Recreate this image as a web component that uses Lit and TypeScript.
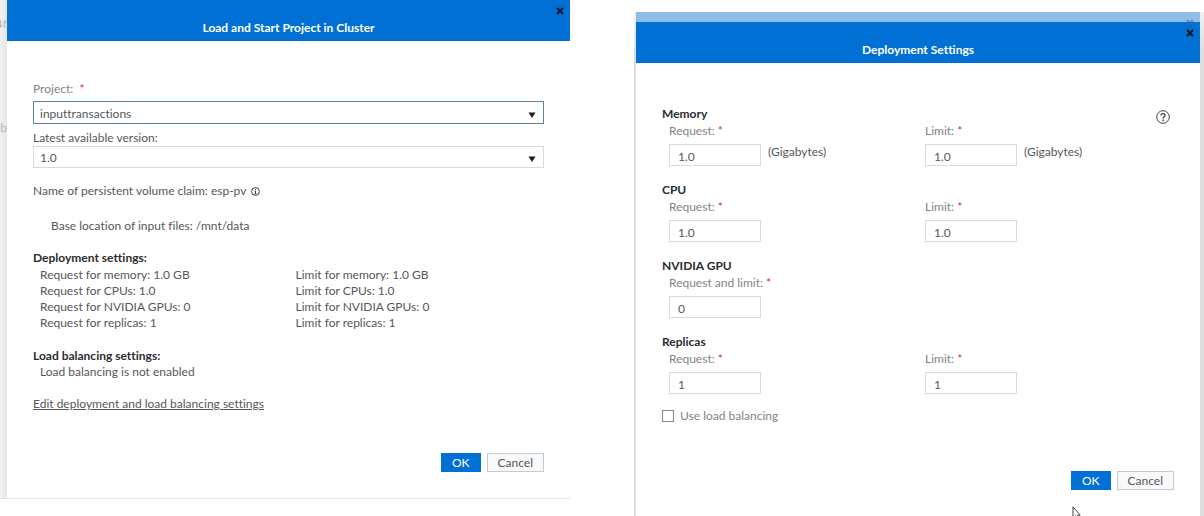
import { LitElement, html, css, svg, nothing } from "lit";
import { customElement, property } from "lit/decorators.js";

const shared = css`
  :host {
    --blue: #0070d4;
    --text: #55575b;
    --muted: #808388;
    --strong: #2a2c30;
    --line: #d9dadd;
    font-family: Lato, "Open Sans", sans-serif;
    font-size: 12px;
    line-height: 16px;
    font-variant-ligatures: none;
    color: var(--text);
  }
  * {
    box-sizing: border-box;
  }
  h3,
  p {
    margin: 0;
  }
  h3 {
    font-size: 12px;
    line-height: 16px;
    font-weight: 700;
    color: var(--strong);
  }
  .label {
    display: block;
    color: var(--muted);
  }
  .req {
    color: #d0303c;
  }
`;

const cross = svg`<path d="M1 1 7 7M7 1 1 7" stroke="currentColor" stroke-width="2" fill="none"/>`;

@customElement("modal-dialog")
class ModalDialog extends LitElement {
  @property() heading = "";

  static styles = [
    shared,
    css`
      :host {
        display: flex;
        flex-direction: column;
        background: #fff;
      }
      .head {
        position: relative;
        background: var(--blue);
        color: #fff;
        padding: 20px 32px 5px;
        text-align: center;
      }
      h2 {
        margin: 0;
        font-size: 12px;
        line-height: 16px;
        font-weight: 700;
      }
      .close {
        position: absolute;
        top: 7px;
        right: 6px;
        display: flex;
        padding: 0;
        border: 0;
        background: none;
        color: #06121f;
      }
      .body {
        flex: 1;
        padding: 40px 26px 0;
      }
      .actions {
        display: flex;
        justify-content: flex-end;
        gap: 6px;
        padding: 0 26px 26px;
      }
      .btn {
        font: inherit;
        line-height: 17px;
        padding: 0 10px;
        border: 1px solid #c6c9cd;
        background: #f8f9fb;
        color: var(--text);
      }
      .primary {
        border-color: var(--blue);
        background: var(--blue);
        color: #fff;
      }
    `,
  ];

  render() {
    return html`
      <header class="head">
        <h2>${this.heading}</h2>
        <button class="close" aria-label="Close">
          <svg width="8" height="8" viewBox="0 0 8 8">${cross}</svg>
        </button>
      </header>
      <div class="body"><slot></slot></div>
      <footer class="actions">
        <button class="btn primary">OK</button>
        <button class="btn">Cancel</button>
      </footer>
    `;
  }
}

@customElement("load-project-form")
class LoadProjectForm extends LitElement {
  static styles = [
    shared,
    css`
      :host {
        display: block;
      }
      .dark {
        color: var(--text);
        margin-top: 6px;
      }
      .pick {
        display: grid;
        align-items: center;
      }
      .pick > * {
        grid-area: 1 / 1;
      }
      .pick svg {
        justify-self: end;
        margin: 4px 8px 0 0;
        pointer-events: none;
      }
      select {
        appearance: none;
        width: 100%;
        height: 22px;
        padding: 2px 24px 0 6px;
        border: 1px solid var(--line);
        border-radius: 0;
        background: #fff;
        color: var(--text);
        font: inherit;
      }
      .active {
        margin-top: 4px;
      }
      .active select {
        height: 23px;
        border-color: #5b84a8;
      }
      .claim {
        display: flex;
        align-items: center;
        gap: 5px;
        margin-top: 15px;
      }
      .base {
        margin: 19px 0 16px;
        padding-left: 18px;
      }
      .pairs {
        display: grid;
        grid-template-columns: 1fr 1fr;
        margin: 1px 0 17px;
      }
      .pairs p,
      .note {
        padding-left: 7px;
      }
      .note {
        margin-bottom: 16px;
      }
      a {
        color: var(--text);
        text-underline-offset: 1px;
      }
    `,
  ];

  private pairs = [
    ["memory", "1.0 GB"],
    ["CPUs", "1.0"],
    ["NVIDIA GPUs", "0"],
    ["replicas", "1"],
  ];

  private arrow() {
    return html`<svg width="8" height="6" viewBox="0 0 8 6">
      <path d="M0.5 0.5h7L4 6z" fill="#1c1e22" />
    </svg>`;
  }

  render() {
    return html`
      <label class="label" for="project">Project:&nbsp; <span class="req">*</span></label>
      <div class="pick active">
        <select id="project">
          <option>inputtransactions</option>
        </select>
        ${this.arrow()}
      </div>
      <label class="label dark" for="version">Latest available version:</label>
      <div class="pick">
        <select id="version">
          <option>1.0</option>
        </select>
        ${this.arrow()}
      </div>
      <p class="claim">
        Name of persistent volume claim: esp-pv
        <svg width="9" height="9" viewBox="0 0 9 9" fill="none" stroke="#3c3e42">
          <circle cx="4.5" cy="4.5" r="3.9" />
          <path d="M4.5 4v3M4.5 2v1.1M3.6 4.2h.9M3.5 6.8h2" />
        </svg>
      </p>
      <p class="base">Base location of input files: /mnt/data</p>
      <h3>Deployment settings:</h3>
      <div class="pairs">
        ${this.pairs.map(
          ([name, value]) => html`
            <p>Request for ${name}: ${value}</p>
            <p>Limit for ${name}: ${value}</p>
          `
        )}
      </div>
      <h3>Load balancing settings:</h3>
      <p class="note">Load balancing is not enabled</p>
      <a href="#deployment">Edit deployment and load balancing settings</a>
    `;
  }
}

interface Field {
  label: string;
  value: string;
  unit?: string;
}

@customElement("deployment-form")
class DeploymentForm extends LitElement {
  static styles = [
    shared,
    css`
      :host {
        display: grid;
        padding-top: 3px;
      }
      .form,
      .help {
        grid-area: 1 / 1;
      }
      .help {
        justify-self: end;
        align-self: start;
        display: flex;
        margin: 4px 4px 0 0;
        padding: 0;
        border: 0;
        background: none;
        z-index: 1;
      }
      .group {
        margin-bottom: 16px;
      }
      .group:last-of-type {
        margin-bottom: 14px;
      }
      .fields {
        display: grid;
        grid-template-columns: 1fr 1fr;
        margin-top: 1px;
      }
      .field {
        padding-left: 7px;
      }
      .entry {
        display: flex;
        gap: 7px;
        margin-top: 5px;
      }
      .text {
        width: 92px;
        height: 22px;
        padding: 2px 8px 0;
        border: 1px solid var(--line);
        background: #fff;
        color: var(--text);
        font: inherit;
      }
      .check {
        display: flex;
        align-items: center;
        gap: 6px;
        color: var(--muted);
      }
      .check input {
        appearance: none;
        width: 12px;
        height: 12px;
        margin: 0;
        border: 1px solid #85888c;
        background: #fff;
      }
    `,
  ];

  private groups: { title: string; fields: Field[] }[] = [
    {
      title: "Memory",
      fields: [
        { label: "Request:", value: "1.0", unit: "(Gigabytes)" },
        { label: "Limit:", value: "1.0", unit: "(Gigabytes)" },
      ],
    },
    {
      title: "CPU",
      fields: [
        { label: "Request:", value: "1.0" },
        { label: "Limit:", value: "1.0" },
      ],
    },
    { title: "NVIDIA GPU", fields: [{ label: "Request and limit:", value: "0" }] },
    {
      title: "Replicas",
      fields: [
        { label: "Request:", value: "1" },
        { label: "Limit:", value: "1" },
      ],
    },
  ];

  render() {
    return html`
      <div class="form">
        ${this.groups.map(
          (group, g) => html`
            <section class="group">
              <h3>${group.title}</h3>
              <div class="fields">
                ${group.fields.map(
                  (field, f) => html`
                    <div class="field">
                      <label class="label" for="f${g}${f}"
                        >${field.label}<span class="req"> *</span></label
                      >
                      <div class="entry">
                        <input class="text" id="f${g}${f}" .value=${field.value} />
                        ${field.unit ? html`<span>${field.unit}</span>` : nothing}
                      </div>
                    </div>
                  `
                )}
              </div>
            </section>
          `
        )}
        <label class="check"><input type="checkbox" />Use load balancing</label>
      </div>
      <button class="help" aria-label="Help">
        <svg width="14" height="14" viewBox="0 0 14 14" fill="none" stroke="#3f4246">
          <circle cx="7" cy="7" r="6.3" />
          <path
            d="M5 5.6C5 4.3 5.8 3.6 7 3.6s2 .7 2 1.8c0 1.4-1.9 1.5-1.9 3.1"
            stroke-width="1.4"
          />
          <path d="M7.1 9.4v1.5" stroke-width="1.5" />
        </svg>
      </button>
    `;
  }
}

@customElement("app-root")
class AppRoot extends LitElement {
  static styles = [
    shared,
    css`
      :host {
        display: grid;
        grid-template-columns: 1fr 1fr;
        gap: 64px;
        min-height: 100vh;
        overflow: hidden;
        background: #fff;
      }
      .left {
        display: grid;
        grid-template-columns: 7px 1fr;
        align-self: start;
        border-bottom: 1px solid #e2e2e2;
      }
      .behind {
        display: flex;
        flex-direction: column;
        align-items: flex-end;
        gap: 88px;
        padding-top: 16px;
        overflow: hidden;
        background: linear-gradient(90deg, #f2f2f2, #e6e6e6);
        color: #b4b4b4;
      }
      .left modal-dialog {
        min-height: 498px;
      }
      .right {
        position: relative;
        display: grid;
        grid-template-rows: auto 1fr;
        margin-top: 12px;
        padding: 0 4px 0 2px;
        background: linear-gradient(#f1f1f1, #dedede 40px);
      }
      .under {
        display: flex;
        justify-content: flex-end;
        align-items: flex-end;
        height: 10px;
        padding-right: 6px;
        background: #8fbde8;
        color: #6f8ba5;
      }
      .cursor {
        position: absolute;
        right: 123px;
        bottom: -5px;
      }
    `,
  ];

  render() {
    return html`
      <section class="left">
        <div class="behind" aria-hidden="true"><span>4f</span><span>0b</span></div>
        <modal-dialog heading="Load and Start Project in Cluster">
          <load-project-form></load-project-form>
        </modal-dialog>
      </section>
      <section class="right">
        <div class="under">
          <svg width="8" height="3" viewBox="0 0 8 3">${cross}</svg>
        </div>
        <modal-dialog heading="Deployment Settings">
          <deployment-form></deployment-form>
        </modal-dialog>
        <svg class="cursor" width="9" height="15" viewBox="0 0 9 15">
          <path
            d="M1 .8v11.4l2.6-2.4 1.6 3.9 1.6-.7-1.6-3.8h3z"
            fill="#fff"
            stroke="#3c3c44"
          />
        </svg>
      </section>
    `;
  }
}
